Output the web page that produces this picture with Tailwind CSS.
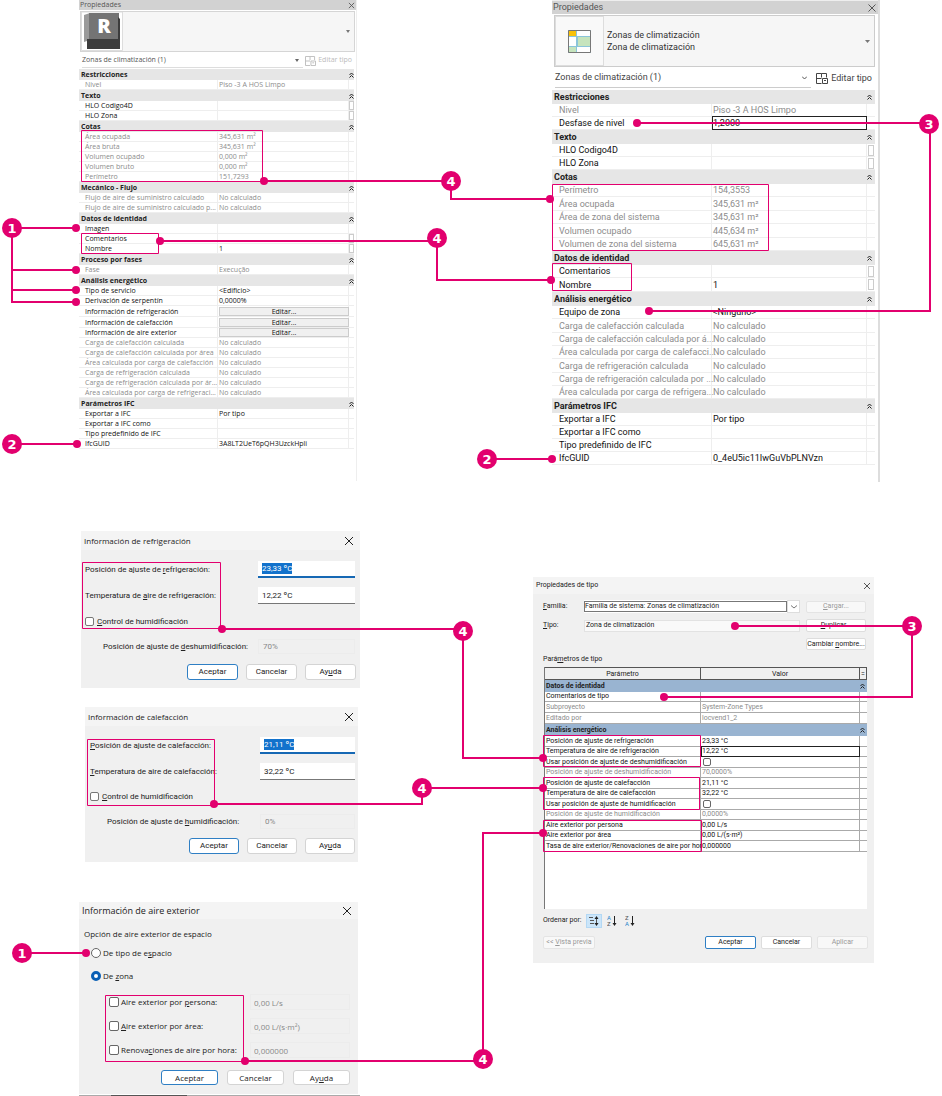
<!DOCTYPE html>
<html lang="es">
<head>
    <meta charset="UTF-8">
    <meta name="viewport" content="width=device-width, initial-scale=1.0">
    <title>Propiedades de zonas de climatización</title>
    <script src="https://cdn.jsdelivr.net/npm/@tailwindcss/browser@4"></script>
</head>
<body class="bg-white font-['Open_Sans','Noto_Sans',sans-serif] text-[#222]">
    <main class="relative flex items-start pl-[79px]">

        <!-- Left column -->
        <div class="w-[281px] shrink-0">

            <!-- Properties palette: space -->
            <section class="w-[278px] h-[481px] border-r border-[#eee] text-[7px]">
                <header class="flex items-center justify-between h-[10px] bg-[#d2d2d2] px-px leading-[10px] text-[#555]">
                    <h2>Propiedades</h2>
                    <button aria-label="Cerrar"><svg class="w-[7px] h-[7px]" viewBox="0 0 8 8" stroke="#555" fill="none"><path d="M1 1l6 6M7 1l-6 6"/></svg></button>
                </header>
                <div class="flex items-center justify-between h-[41px] mt-px mx-px border border-[#d5d5d5] bg-[#f6f6f6] pr-1">
                    <svg class="w-[42px] h-[39px]" viewBox="0 0 42 39">
                        <path fill="#fff" stroke="#ddd" d="M.5 0h41v38.500h-41z"/>
                        <path fill="#9a9a9a" d="M3 3L9 1v27l-6 2z"/>
                        <path fill="#747474" d="M8 1h30v27H8z"/>
                        <path fill="#3c3c3c" d="M6 27h31V5l2 2v30H6z"/>
                        <text x="23" y="21" text-anchor="middle" fill="#fff" font-size="20" font-weight="800">R</text>
                    </svg>
                    <svg class="w-[4px] h-[3px]" viewBox="0 0 4 3"><path fill="#777" d="M0 0h4L2 3z"/></svg>
                </div>
                <div class="flex items-center h-[17px] pl-[3px] pr-[4px] text-[#555]">
                    <div class="flex grow items-center justify-between h-[15px] border-b border-[#ddd] pr-1">
                        <span>Zonas de climatización (1)</span>
                        <svg class="w-[4px] h-[3px]" viewBox="0 0 4 3"><path fill="#666" d="M0 0h4L2 3z"/></svg>
                    </div>
                    <button class="flex items-center gap-[2px] pl-[2px] text-[#bbb]" disabled>
                        <svg class="w-[11px] h-[10px]" viewBox="0 0 12 11" fill="none" stroke="#bbb"><path d="M5.500 10.500h-5v-10h5v4M.5 5.500h5M5.500 .5h5v4M6.500 5.500h5v5h-5zM8 7.500h2"/></svg>
                        Editar tipo
                    </button>
                </div>
                <table id="space" class="w-[275px] table-fixed border-separate border-spacing-0"></table>
            </section>

            <!-- Cooling information -->
            <section class="w-[279px] h-[157px] mt-[50px] ml-[2px] bg-[#f0f0f0] text-[8px]">
                <header class="flex items-center justify-between h-[19px] bg-[#f4f4f4] pl-[3px] pr-[7px]">
                    <h2>Información de refrigeración</h2>
                    <button aria-label="Cerrar"><svg class="w-[8px] h-[8px]" viewBox="0 0 8 8" stroke="#222" fill="none"><path d="M0 0l8 8M8 0l-8 8"/></svg></button>
                </header>
                <form class="pt-[11px] pl-1 pr-[5px] font-[Roboto,sans-serif]">
                    <div class="flex items-center justify-between h-[17px]">
                        <label for="cool-set">Posición de ajuste de <u>r</u>efrigeración:</label>
                        <span class="flex items-center w-[97px] h-[17px] pl-1 bg-white border-b-2 border-[#1668b4]"><input id="cool-set" class="field-sizing-content bg-[#1272cc] text-white leading-[11px]" value="23,33 ºC"></span>
                    </div>
                    <div class="flex items-center justify-between h-[17px] mt-[9px]">
                        <label for="cool-air">Temperatura de <u>a</u>ire de refrigeración:</label>
                        <input id="cool-air" class="w-[97px] h-[17px] px-1 bg-white border-b border-[#777]" value="12,22 ºC">
                    </div>
                    <label class="flex items-center gap-[3px] h-[17px] mt-[9px]"><input type="checkbox" class="appearance-none size-[9px] rounded-[2px] border border-[#777] bg-white"><span><u>C</u>ontrol de humidificación</span></label>
                    <div class="flex items-center justify-between h-[17px] mt-[8px] pl-[18px]">
                        <label for="cool-deh">Posición de ajuste de <u>d</u>eshumidificación:</label>
                        <input id="cool-deh" class="w-[97px] h-[15px] px-1 border border-[#ececec] text-[#888]" value="70%" disabled>
                    </div>
                    <div class="flex justify-end gap-[8px] mt-[9px] -mr-px">
                        <button type="button" class="w-[51px] h-[16px] rounded-[3px] border border-[#2f7fc4] bg-white">Aceptar</button>
                        <button type="button" class="w-[51px] h-[16px] rounded-[3px] border border-[#d4d4d4] bg-white">Cancelar</button>
                        <button type="button" class="w-[51px] h-[16px] rounded-[3px] border border-[#d4d4d4] bg-white">Ay<u>u</u>da</button>
                    </div>
                </form>
            </section>

            <!-- Heating information -->
            <section class="w-[273px] h-[155px] mt-[19px] ml-[6px] bg-[#f0f0f0] text-[8px]">
                <header class="flex items-center justify-between h-[19px] bg-[#f4f4f4] pl-[3px] pr-[5px]">
                    <h2>Información de calefacción</h2>
                    <button aria-label="Cerrar"><svg class="w-[8px] h-[8px]" viewBox="0 0 8 8" stroke="#222" fill="none"><path d="M0 0l8 8M8 0l-8 8"/></svg></button>
                </header>
                <form class="pt-[11px] pl-[5px] pr-[3px] font-[Roboto,sans-serif]">
                    <div class="flex items-center justify-between h-[17px]">
                        <label for="heat-set"><u>P</u>osición de ajuste de calefacción:</label>
                        <span class="flex items-center w-[95px] h-[17px] pl-1 bg-white border-b-2 border-[#1668b4]"><input id="heat-set" class="field-sizing-content bg-[#1272cc] text-white leading-[11px]" value="21,11 ºC"></span>
                    </div>
                    <div class="flex items-center justify-between h-[17px] mt-[9px]">
                        <label for="heat-air"><u>T</u>emperatura de aire de calefacción:</label>
                        <input id="heat-air" class="w-[95px] h-[17px] px-1 bg-white border-b border-[#777]" value="32,22 ºC">
                    </div>
                    <label class="flex items-center gap-[3px] h-[17px] mt-[8px]"><input type="checkbox" class="appearance-none size-[9px] rounded-[2px] border border-[#777] bg-white"><span><u>C</u>ontrol de humidificación</span></label>
                    <div class="flex items-center justify-between h-[17px] mt-[8px] pl-[17px]">
                        <label for="heat-hum">Posición de ajuste de <u>h</u>umidificación:</label>
                        <input id="heat-hum" class="w-[95px] h-[15px] px-1 border border-[#ececec] text-[#888]" value="0%" disabled>
                    </div>
                    <div class="flex justify-end gap-[8px] mt-[8px]">
                        <button type="button" class="w-[50px] h-[16px] rounded-[3px] border border-[#2f7fc4] bg-white">Aceptar</button>
                        <button type="button" class="w-[50px] h-[16px] rounded-[3px] border border-[#d4d4d4] bg-white">Cancelar</button>
                        <button type="button" class="w-[50px] h-[16px] rounded-[3px] border border-[#d4d4d4] bg-white">Ay<u>u</u>da</button>
                    </div>
                </form>
            </section>

            <!-- Outdoor air information -->
            <section class="w-[279px] h-[192px] mt-[40px] bg-[#f0f0f0] text-[8px]">
                <header class="flex items-center justify-between h-[17px] bg-[#f4f4f4] pl-[3px] pr-[7px] text-[9px]">
                    <h2>Información de aire exterior</h2>
                    <button aria-label="Cerrar"><svg class="w-[8px] h-[8px]" viewBox="0 0 8 8" stroke="#222" fill="none"><path d="M0 0l8 8M8 0l-8 8"/></svg></button>
                </header>
                <form class="pl-[5px] pr-[8px] pt-[9px]">
                    <p class="h-[12px] leading-[12px]">Opción de aire exterior de espacio</p>
                    <label class="flex items-center gap-[2px] h-[12px] mt-[7px] ml-[7px]"><input type="radio" name="option" class="appearance-none size-[10px] rounded-full border border-[#666] bg-white"><span>De tipo de e<u>s</u>pacio</span></label>
                    <label class="flex items-center gap-[2px] h-[12px] mt-[11px] ml-[7px]"><input type="radio" name="option" checked class="appearance-none size-[10px] rounded-full border-[3px] border-[#0a5fb4] bg-white"><span>De <u>z</u>ona</span></label>
                    <div class="flex flex-col gap-[8px] mt-[12px] pl-[25px]">
                        <div class="flex items-center justify-between h-[16px]">
                            <label class="flex items-center gap-[2px]"><input type="checkbox" class="appearance-none size-[10px] rounded-[2px] border border-[#666] bg-white"><span>Aire exterior por <u>p</u>ersona:</span></label>
                            <input aria-label="Aire exterior por persona" class="w-[100px] h-[16px] pl-[3px] border border-[#ececec] text-[#888]" value="0,00 L/s" disabled>
                        </div>
                        <div class="flex items-center justify-between h-[16px]">
                            <label class="flex items-center gap-[2px]"><input type="checkbox" class="appearance-none size-[10px] rounded-[2px] border border-[#666] bg-white"><span><u>A</u>ire exterior por área:</span></label>
                            <input aria-label="Aire exterior por área" class="w-[100px] h-[16px] pl-[3px] border border-[#ececec] text-[#888]" value="0,00 L/(s·m²)" disabled>
                        </div>
                        <div class="flex items-center justify-between h-[16px]">
                            <label class="flex items-center gap-[2px]"><input type="checkbox" class="appearance-none size-[10px] rounded-[2px] border border-[#666] bg-white"><span>Renova<u>c</u>iones de aire por hora:</span></label>
                            <input aria-label="Renovaciones de aire por hora" class="w-[100px] h-[16px] pl-[3px] border border-[#ececec] text-[#888]" value="0,000000" disabled>
                        </div>
                    </div>
                    <div class="flex justify-end gap-[9px] mt-[12px]">
                        <button type="button" class="w-[57px] h-[15px] rounded-[3px] border border-[#2f7fc4] bg-white">Aceptar</button>
                        <button type="button" class="w-[57px] h-[15px] rounded-[3px] border border-[#d4d4d4] bg-white">Cancelar</button>
                        <button type="button" class="w-[57px] h-[15px] rounded-[3px] border border-[#d4d4d4] bg-white">Ay<u>u</u>da</button>
                    </div>
                </form>
            </section>
            <div class="flex h-px mt-px bg-[#aaa]"><i class="w-[76px] ml-[32px] bg-[#555]"></i></div>
        </div>

        <!-- Right column -->
        <div class="w-[346px] shrink-0 ml-[173px] font-[Roboto,sans-serif]">

            <!-- Properties palette: zone -->
            <section class="w-[328px] h-[482px] ml-[19px] border-r-2 border-[#ddd] text-[9px]">
                <header class="flex items-center justify-between h-[14px] bg-[#d2d2d2] border-t border-[#eee] pl-px pr-[2px] text-[#555]">
                    <h2>Propiedades</h2>
                    <button aria-label="Cerrar"><svg class="w-[8px] h-[8px]" viewBox="0 0 8 8" stroke="#555" fill="none"><path d="M.5 .5l7 7M7.500 .5l-7 7"/></svg></button>
                </header>
                <div class="flex items-center h-[52px] mt-px ml-[2px] mr-[3px] border border-[#ccc] bg-[#f6f6f6] pr-1">
                    <div class="flex items-center justify-center w-[49px] h-[50px] border border-[#ddd] bg-[#f9f9f9]">
                        <svg class="w-[23px] h-[23px]" viewBox="0 0 23 23" stroke="#8bc5da">
                            <path fill="#fff" d="M.5 .5h22v22H.5z"/>
                            <path fill="#f9c20a" d="M.5 .5h8v6h-8z"/>
                            <path fill="#c6e4bd" d="M9.500 6.500h13v10h-13zM.5 16.500h8v6h-8z"/>
                            <path fill="none" d="M8.500 0v23M0 6.500h23M0 16.500h23"/>
                            <path fill="none" stroke="#777" d="M.5 .5h22v22H.5z"/>
                        </svg>
                    </div>
                    <p class="grow pl-[3px] leading-[12px] text-[#333]">Zonas de climatización<br>Zona de climatización</p>
                    <svg class="w-[5px] h-[3px]" viewBox="0 0 5 3"><path fill="#777" d="M0 0h5L2.500 3z"/></svg>
                </div>
                <div class="flex items-center h-[23px] pl-[3px] pr-[6px] text-[#444]">
                    <div class="flex grow items-center justify-between h-[18px] border-b border-[#ccc] pr-1">
                        <span>Zonas de climatización (1)</span>
                        <svg class="w-[5px] h-[4px]" viewBox="0 0 5 4" fill="none" stroke="#555"><path d="M0 .5l2.500 2.500L5 .5"/></svg>
                    </div>
                    <button class="flex items-center gap-[3px] pl-[5px]">
                        <svg class="w-[12px] h-[11px]" viewBox="0 0 12 11" fill="none" stroke="#444"><path d="M5.500 10.500h-5v-10h5v4M.5 5.500h5M5.500 .5h5v4M6.500 5.500h5v5h-5zM8 7.500h2"/></svg>
                        Editar tipo
                    </button>
                </div>
                <table id="zone" class="w-[323px] table-fixed border-separate border-spacing-0"></table>
            </section>

            <!-- Type properties -->
            <section class="w-[341px] h-[386px] mt-[95px] bg-[#f0f0f0] text-[7px]">
                <header class="flex items-center justify-between h-[17px] bg-[#f4f4f4] pl-[3px] pr-[4px]">
                    <h2>Propiedades de tipo</h2>
                    <button aria-label="Cerrar"><svg class="w-[6px] h-[6px]" viewBox="0 0 8 8" stroke="#222" fill="none"><path d="M0 0l8 8M8 0l-8 8"/></svg></button>
                </header>
                <form class="pt-[6px] pl-[10px] pr-[7px]">
                    <div class="grid grid-cols-[41px_216px_60px] gap-y-[6px] items-center">
                        <label for="family"><u>F</u>amilia:</label>
                        <div class="flex items-center h-[13px] bg-white">
                            <select id="family" class="appearance-none w-[203px] h-[11px] border border-[#777] leading-[9px]"><option>Familia de sistema: Zonas de climatización</option></select>
                            <span class="flex items-center justify-center grow h-[13px] border border-[#ddd]"><svg class="w-[6px] h-[4px]" viewBox="0 0 6 4" fill="none" stroke="#777"><path d="M0 .5l3 2.500L6 .5"/></svg></span>
                        </div>
                        <button type="button" class="h-[12px] ml-[6px] -mr-[6px] rounded-[2px] border border-[#e4e4e4] bg-[#f8f8f8] leading-[9px] text-[#999]" disabled><u>C</u>argar...</button>
                        <label for="type"><u>T</u>ipo:</label>
                        <select id="type" class="appearance-none h-[12px] pl-px border border-[#e2e2e2] bg-[#f9f9f9] leading-[9px]"><option>Zona de climatización</option></select>
                        <button type="button" class="h-[13px] ml-[6px] -mr-[6px] rounded-[2px] border border-[#ddd] bg-white leading-[9px]"><u>D</u>uplicar...</button>
                        <button type="button" class="col-start-3 h-[12px] ml-[6px] -mr-[6px] rounded-[2px] border border-[#ddd] bg-white leading-[9px] whitespace-nowrap">Cambiar <u>n</u>ombre...</button>
                    </div>
                    <p class="h-[10px] mt-[4px] leading-[10px]">Pará<u>m</u>etros de tipo</p>
                    <div class="h-[242px] mt-[3px] ml-px border-l border-[#777] bg-white">
                        <table id="types" class="w-full table-fixed border-separate border-spacing-0"></table>
                    </div>
                    <div class="flex items-center h-[15px] mt-[4px]">
                        <span>Ordenar por:</span>
                        <button type="button" aria-label="Orden predeterminado" class="flex items-center justify-center w-[16px] h-[14px] ml-[4px] bg-[#cbe5f9] border border-[#b4d8f4]">
                            <svg class="w-[10px] h-[10px]" viewBox="0 0 10 10" fill="none" stroke="#555"><path d="M0 1.500h4M1 4.500h4M1 7.500h4M7.500 1v8"/><path fill="#222" stroke="none" d="M5.500 3L7.500 0l2 3zM5.500 7l2 3 2-3z"/></svg>
                        </button>
                        <button type="button" aria-label="Ascendente" class="ml-[5px]">
                            <svg class="w-[10px] h-[12px]" viewBox="0 0 10 12"><text x="0" y="5" font-size="6" fill="#1c83c9">A</text><text x="0" y="11" font-size="6" fill="#555">Z</text><path fill="none" stroke="#222" d="M7.500 1v8"/><path fill="#222" d="M5.500 8l2 3 2-3z"/></svg>
                        </button>
                        <button type="button" aria-label="Descendente" class="ml-[8px]">
                            <svg class="w-[10px] h-[12px]" viewBox="0 0 10 12"><text x="0" y="5" font-size="6" fill="#555">Z</text><text x="0" y="11" font-size="6" fill="#1c83c9">A</text><path fill="none" stroke="#222" d="M7.500 1v8"/><path fill="#222" d="M5.500 8l2 3 2-3z"/></svg>
                        </button>
                    </div>
                    <div class="flex gap-[5px] mt-[8px] -mr-px">
                        <button type="button" class="w-[52px] h-[13px] mr-auto rounded-[2px] border border-[#e4e4e4] bg-[#f8f8f8] leading-[9px] text-[#999]" disabled>&lt;&lt; <u>V</u>ista previa</button>
                        <button type="button" class="w-[51px] h-[13px] rounded-[2px] border border-[#2f7fc4] bg-white leading-[9px]">Aceptar</button>
                        <button type="button" class="w-[51px] h-[13px] rounded-[2px] border border-[#ddd] bg-white leading-[9px]">Cancelar</button>
                        <button type="button" class="w-[51px] h-[13px] rounded-[2px] border border-[#e4e4e4] bg-[#f8f8f8] leading-[9px] text-[#999]" disabled>Aplicar</button>
                    </div>
                </form>
            </section>
        </div>

        <!-- Callouts -->
        <svg class="absolute inset-0 w-full h-full pointer-events-none" fill="none" stroke="#e2006e">
            <g>
                <path d="M81.500 130.500h181v51h-181zM81.500 233.500h77v20h-77z"/>
                <path d="M552.500 184.500h216v66h-216zM552.500 263.500h79v27h-79z"/>
                <path d="M82.500 562.500h138v66h-138zM87.500 739.500h127v66h-127zM105.500 995.500h138v66h-138z"/>
                <path d="M543.500 735.500h157v31h-157zM543.500 777.500h156v32h-156zM543.500 820.500h158v31h-158z"/>
            </g>
            <g stroke-width="2">
                <path d="M12 228H76M12 228V302H76M12 270H76M12 290H76M12 444H76"/>
                <path d="M264 181H451V199H550M160 241H437V280H551M487 459H552"/>
                <path d="M637 123H930V311H649M735 626H912V697H664"/>
                <path d="M222 629H463V758H543M214 804H422V788H543M22 953H86M245 1061H483V833H543"/>
            </g>
            <g id="dots" fill="#e2006e" stroke="none"></g>
            <g id="badges" fill="#e2006e" stroke="none" text-anchor="middle" font-family="DejaVu Sans" font-size="13" font-weight="bold"></g>
        </svg>
    </main>

    <script>
        // row kinds: h = section header, r = read-only (grey), e = editable, b = value is a button
        // flags: box = small button at the right, tall = one pixel higher, edit = value being edited
        const space = [
            ['h', 'Restricciones'],
            ['r', 'Nivel', 'Piso -3 A HOS Limpo'],
            ['h', 'Texto'],
            ['e', 'HLO Codigo4D', '', 'box'],
            ['e', 'HLO Zona', '', 'box'],
            ['h', 'Cotas'],
            ['r', 'Área ocupada', '345,631 m²'],
            ['r', 'Área bruta', '345,631 m²'],
            ['r', 'Volumen ocupado', '0,000 m²'],
            ['r', 'Volumen bruto', '0,000 m²'],
            ['r', 'Perímetro', '151,7293'],
            ['h', 'Mecánico - Flujo'],
            ['r', 'Flujo de aire de suministro calculado', 'No calculado'],
            ['r', 'Flujo de aire de suministro calculado p...', 'No calculado'],
            ['h', 'Datos de identidad'],
            ['e', 'Imagen', ''],
            ['e', 'Comentarios', '', 'box'],
            ['e', 'Nombre', '1', 'box'],
            ['h', 'Proceso por fases'],
            ['r', 'Fase', 'Execução'],
            ['h', 'Análisis energético'],
            ['e', 'Tipo de servicio', '&lt;Edificio&gt;'],
            ['e', 'Derivación de serpentín', '0,0000%'],
            ['b', 'Información de refrigeración', 'Editar...', 'tall'],
            ['b', 'Información de calefacción', 'Editar...', 'tall'],
            ['b', 'Información de aire exterior', 'Editar...'],
            ['r', 'Carga de calefacción calculada', 'No calculado'],
            ['r', 'Carga de calefacción calculada por área', 'No calculado'],
            ['r', 'Área calculada por carga de calefacción', 'No calculado'],
            ['r', 'Carga de refrigeración calculada', 'No calculado'],
            ['r', 'Carga de refrigeración calculada por ár...', 'No calculado'],
            ['r', 'Área calculada por carga de refrigeraci...', 'No calculado'],
            ['h', 'Parámetros IFC'],
            ['e', 'Exportar a IFC', 'Por tipo'],
            ['e', 'Exportar a IFC como', ''],
            ['e', 'Tipo predefinido de IFC', ''],
            ['e', 'IfcGUID', '3A8LT2UeT6pQH3UzckHpli'],
        ];
        const zone = [
            ['h', 'Restricciones'],
            ['r', 'Nivel', 'Piso -3 A HOS Limpo'],
            ['e', 'Desfase de nivel', '1,2000', 'edit'],
            ['h', 'Texto'],
            ['e', 'HLO Codigo4D', '', 'box'],
            ['e', 'HLO Zona', '', 'box'],
            ['h', 'Cotas'],
            ['r', 'Perímetro', '154,3553'],
            ['r', 'Área ocupada', '345,631 m²', 'tall'],
            ['r', 'Área de zona del sistema', '345,631 m²'],
            ['r', 'Volumen ocupado', '445,634 m²', 'tall'],
            ['r', 'Volumen de zona del sistema', '645,631 m²'],
            ['h', 'Datos de identidad'],
            ['e', 'Comentarios', '', 'box'],
            ['e', 'Nombre', '1', 'box tall'],
            ['h', 'Análisis energético'],
            ['e', 'Equipo de zona', '&lt;Ninguno&gt;'],
            ['r', 'Carga de calefacción calculada', 'No calculado', 'tall'],
            ['r', 'Carga de calefacción calculada por á...', 'No calculado'],
            ['r', 'Área calculada por carga de calefacci...', 'No calculado'],
            ['r', 'Carga de refrigeración calculada', 'No calculado', 'tall'],
            ['r', 'Carga de refrigeración calculada por ...', 'No calculado'],
            ['r', 'Área calculada por carga de refrigera...', 'No calculado'],
            ['h', 'Parámetros IFC'],
            ['e', 'Exportar a IFC', 'Por tipo'],
            ['e', 'Exportar a IFC como', ''],
            ['e', 'Tipo predefinido de IFC', ''],
            ['e', 'IfcGUID', '0_4eU5ic11IwGuVbPLNVzn'],
        ];
        const types = [
            ['h', 'Datos de identidad'],
            ['e', 'Comentarios de tipo', ''],
            ['r', 'Subproyecto', 'System-Zone Types', 'tall'],
            ['r', 'Editado por', 'locvend1_2', 'tall'],
            ['h', 'Análisis energético'],
            ['e', 'Posición de ajuste de refrigeración', '23,33 °C', 'tall'],
            ['e', 'Temperatura de aire de refrigeración', '12,22 °C', 'edit'],
            ['e', 'Usar posición de ajuste de deshumidificación', 'check', 'tall'],
            ['r', 'Posición de ajuste de deshumidificación', '70,0000%'],
            ['e', 'Posición de ajuste de calefacción', '21,11 °C', 'tall'],
            ['e', 'Temperatura de aire de calefacción', '32,22 °C'],
            ['e', 'Usar posición de ajuste de humidificación', 'check', 'tall'],
            ['r', 'Posición de ajuste de humidificación', '0,0000%'],
            ['e', 'Aire exterior por persona', '0,00 L/s', 'tall'],
            ['e', 'Aire exterior por área', '0,00 L/(s·m²)'],
            ['e', 'Tasa de aire exterior/Renovaciones de aire por hor', '0,000000', 'tall'],
        ];
        const collapse = '<button type="button" aria-label="Contraer" class="block"><svg class="w-[5px] h-[6px]" viewBox="0 0 5 6" fill="none" stroke="#222"><path d="M.5 3l2-2 2 2M.5 5.500l2-2 2 2"/></svg></button>';

        const looks = {
            space: { cols: ['w-[139px]', 'w-[131px]', 'w-[5px]'], head: 'h-[11px] bg-[#e6e6e6]', row: 'h-[10px]', tall: 'h-[11px]', line: 'border-[#eee]', lead: 'leading-[9px]', pad: 'pl-[6px]', val: 'pl-px', first: 'pl-[2px]', box: 'w-full h-[9px]', edit: 'h-[9px]' },
            zone: { cols: ['w-[160px]', 'w-[155px]', 'w-[8px]'], head: 'h-[14px] bg-[#e6e6e6]', row: 'h-[13px]', tall: 'h-[14px]', line: 'border-[#eee]', lead: 'leading-[12px]', pad: 'pl-[7px]', val: 'pl-px', first: 'pl-[2px]', box: 'w-[6px] h-[11px] ml-px', edit: 'h-[12px]' },
            types: { cols: ['w-[156px]', 'w-[159px]', 'w-[7px]'], head: 'h-[12px] bg-[#99b4d1]', row: 'h-[10px]', tall: 'h-[11px]', line: 'border-[#aaa]', lead: 'leading-[9px]', pad: 'pl-px', val: 'pl-px', first: 'pl-px', box: '', edit: 'h-[9px]' },
        };

        function buildTable(id, rows) {
            const k = looks[id];
            let html = '<colgroup>' + k.cols.map(c => `<col class="${c}">`).join('') + '</colgroup>';
            if (id === 'types') {
                html += '<thead><tr class="leading-[10px]">' + ['Parámetro', 'Valor', '='].map(t => `<th class="h-[13px] p-0 border-y border-r border-[#555] bg-[#f0f0f0] font-normal">${t}</th>`).join('') + '</tr></thead>';
            }
            html += '<tbody>';
            rows.forEach(([kind, name, value, flags = '']) => {
                if (kind === 'h') {
                    html += `<tr class="${k.lead}"><th colspan="2" class="p-0 ${k.first} ${k.head} text-left font-bold">${name}</th><td class="p-0 ${k.head}">${collapse}</td></tr>`;
                    return;
                }
                const h = flags.includes('tall') ? k.tall : k.row;
                const color = kind === 'r' ? 'text-[#8c8c8c]' : 'text-[#111]';
                let v = value;
                if (kind === 'b') v = `<button type="button" class="block w-[130px] h-[9px] border border-[#ccc] bg-[#f0f0f0] leading-[7px]">${value}</button>`;
                if (value === 'check') v = `<input type="checkbox" aria-label="${name}" class="block appearance-none size-[8px] ml-px rounded-[2px] border border-[#666] bg-white">`;
                if (flags.includes('edit')) v = `<input aria-label="${name}" class="block w-full ${k.edit} outline outline-[#222] leading-[9px]" value="${value}">`;
                const box = flags.includes('box') ? `<button type="button" aria-label="${name}" class="block ${k.box} border border-[#ccc] bg-white"></button>` : '';
                html += `<tr class="${k.lead} ${color} whitespace-nowrap">
                    <td class="p-0 ${k.pad} ${h} border-b border-r ${k.line}">${name}</td>
                    <td class="p-0 ${k.val} ${h} border-b border-r ${k.line}">${v}</td>
                    <td class="p-0 ${h} border-b ${k.line}">${box}</td></tr>`;
            });
            document.getElementById(id).innerHTML = html + '</tbody>';
        }
        buildTable('space', space);
        buildTable('zone', zone);
        buildTable('types', types);

        const dots = [[76, 228], [76, 270], [76, 290], [76, 302], [77, 444], [264, 181], [160, 241], [550, 199], [551, 280], [552, 459],
            [637, 123], [649, 311], [222, 629], [214, 804], [86, 953], [245, 1061], [735, 626], [664, 697], [543, 758], [543, 788], [543, 833]];
        document.getElementById('dots').innerHTML = dots.map(([x, y]) => `<circle cx="${x}" cy="${y}" r="4"/>`).join('');

        const badges = [[12, 228, 1], [12, 444, 2], [451, 181, 4], [437, 238, 4], [929, 124, 3], [487, 459, 2], [463, 631, 4], [422, 788, 4], [912, 626, 3], [22, 953, 1], [483, 1059, 4]];
        document.getElementById('badges').innerHTML = badges.map(([x, y, n]) => `<circle cx="${x}" cy="${y}" r="10"/><text x="${x}" y="${y + 5}" fill="#fff">${n}</text>`).join('');
    </script>
</body>
</html>
